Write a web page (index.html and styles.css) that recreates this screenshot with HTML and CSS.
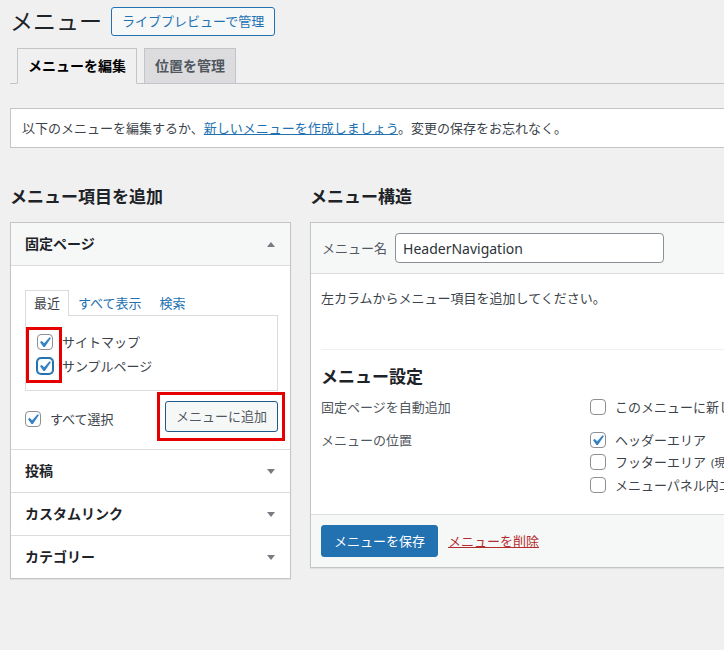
FILE: index.html
```html
<!DOCTYPE html>
<html lang="ja">
<head>
<meta charset="utf-8">
<title>メニュー</title>
<link rel="stylesheet" href="styles.css">
</head>
<body>
<div class="wrap">
  <div class="page-head">
    <h1 class="page-title">メニュー</h1>
    <a class="title-action" href="#">ライブプレビューで管理</a>
  </div>

  <nav class="nav-tabs">
    <a class="nav-tab active" href="#">メニューを編集</a>
    <a class="nav-tab" href="#">位置を管理</a>
  </nav>

  <div class="manage-menus">以下のメニューを編集するか、<a href="#">新しいメニューを作成しましょう</a>。変更の保存をお忘れなく。</div>

  <div class="columns">
    <div class="col-left">
      <h2 class="col-title">メニュー項目を追加</h2>
      <div class="accordion">
        <section class="acc-section open">
          <h3 class="acc-title">固定ページ<svg class="arrow" viewBox="0 0 8 5" width="8" height="5"><polygon points="0,5 8,5 4,0"/></svg></h3>
          <div class="acc-content">
            <ul class="inner-tabs">
              <li class="inner-tab active">最近</li>
              <li class="inner-tab"><a href="#">すべて表示</a></li>
              <li class="inner-tab"><a href="#">検索</a></li>
            </ul>
            <div class="tab-panel">
              <ul class="check-list">
                <li><span class="cb"><svg viewBox="0 0 20 20"><path d="M14.83 4.89l1.34.94-5.81 8.38H9.02L5.78 9.67l1.34-1.25 2.57 2.4z"/></svg></span>サイトマップ</li>
                <li><span class="cb focus"><svg viewBox="0 0 20 20"><path d="M14.83 4.89l1.34.94-5.81 8.38H9.02L5.78 9.67l1.34-1.25 2.57 2.4z"/></svg></span>サンプルページ</li>
              </ul>
              <span class="annot annot-checks"></span>
            </div>
            <div class="add-row">
              <label class="select-all"><span class="cb"><svg viewBox="0 0 20 20"><path d="M14.83 4.89l1.34.94-5.81 8.38H9.02L5.78 9.67l1.34-1.25 2.57 2.4z"/></svg></span>すべて選択</label>
              <span class="btn-wrap"><button class="btn-add" type="button">メニューに追加</button><span class="annot annot-btn"></span></span>
            </div>
          </div>
        </section>
        <section class="acc-section">
          <h3 class="acc-title">投稿<svg class="arrow" viewBox="0 0 8 5" width="8" height="5"><polygon points="0,0 8,0 4,5"/></svg></h3>
        </section>
        <section class="acc-section">
          <h3 class="acc-title">カスタムリンク<svg class="arrow" viewBox="0 0 8 5" width="8" height="5"><polygon points="0,0 8,0 4,5"/></svg></h3>
        </section>
        <section class="acc-section">
          <h3 class="acc-title">カテゴリー<svg class="arrow" viewBox="0 0 8 5" width="8" height="5"><polygon points="0,0 8,0 4,5"/></svg></h3>
        </section>
      </div>
    </div>

    <div class="col-right">
      <h2 class="col-title">メニュー構造</h2>
      <div class="menu-box">
        <div class="menu-head">
          <label class="menu-name-label" for="menu-name">メニュー名</label>
          <input class="menu-name-input" id="menu-name" type="text" value="HeaderNavigation">
        </div>
        <div class="menu-body">
          <p class="instructions">左カラムからメニュー項目を追加してください。</p>
          <div class="menu-settings">
            <h3 class="settings-title">メニュー設定</h3>
            <div class="setting setting-auto">
              <div class="setting-label">固定ページを自動追加</div>
              <div class="setting-options">
                <div class="opt"><span class="cb"></span>このメニューに新しいトップレベル固定ページを自動的に追加</div>
              </div>
            </div>
            <div class="setting setting-loc">
              <div class="setting-label">メニューの位置</div>
              <div class="setting-options">
                <div class="opt"><span class="cb"><svg viewBox="0 0 20 20"><path d="M14.83 4.89l1.34.94-5.81 8.38H9.02L5.78 9.67l1.34-1.25 2.57 2.4z"/></svg></span>ヘッダーエリア</div>
                <div class="opt"><span class="cb"></span>フッターエリア <span class="loc-set">(現在の設定: フッターメニュー)</span></div>
                <div class="opt"><span class="cb"></span>メニューパネル内エリア</div>
              </div>
            </div>
          </div>
        </div>
        <div class="menu-foot">
          <button class="btn-primary" type="button">メニューを保存</button>
          <a class="delete-link" href="#">メニューを削除</a>
        </div>
      </div>
    </div>
  </div>
</div>
</body>
</html>
```

FILE: styles.css
```css
* { box-sizing: border-box; }

html, body {
  margin: 0;
  padding: 0;
  overflow: hidden;
}

body {
  width: 724px;
  height: 650px;
  background: #f0f0f1;
  color: #3c434a;
  font-family: "Noto Sans", "Noto Sans CJK JP", sans-serif;
  font-size: 13px;
  line-height: 1.4;
}

.wrap {
  width: 930px;
  padding: 6px 0 0 10px;
}

/* page header */
.page-head {
  display: flex;
  align-items: center;
  height: 30px;
}

.page-title {
  margin: 0;
  font-size: 23px;
  font-weight: 400;
  line-height: 30px;
  color: #1d2327;
}

.title-action {
  margin-left: 9px;
  height: 29px;
  padding: 0 10px;
  border: 1px solid #2271b1;
  border-radius: 3px;
  background: #f6f7f7;
  color: #2271b1;
  font-size: 13px;
  line-height: 27px;
  text-decoration: none;
}

/* nav tabs */
.nav-tabs {
  display: flex;
  gap: 7px;
  margin-top: 12px;
  padding-left: 7px;
  border-bottom: 1px solid #c3c4c7;
}

.nav-tab {
  height: 36px;
  margin-bottom: -1px;
  padding: 0 10px;
  border: 1px solid #c3c4c7;
  background: #dcdcde;
  color: #50575e;
  font-size: 14px;
  font-weight: 700;
  line-height: 34px;
  text-decoration: none;
}

.nav-tab.active {
  background: #f0f0f1;
  border-bottom-color: #f0f0f1;
  color: #000;
}

/* notice box */
.manage-menus {
  margin-top: 24px;
  height: 40px;
  padding: 0 11px;
  border: 1px solid #c3c4c7;
  background: #fff;
  line-height: 38px;
  white-space: nowrap;
}

.manage-menus a {
  color: #2271b1;
  text-decoration: underline;
}

/* columns */
.columns {
  display: flex;
  align-items: flex-start;
  gap: 19px;
  margin-top: 37px;
}

.col-left {
  flex: none;
  width: 281px;
}

.col-right {
  flex: none;
  width: 620px;
}

.col-title {
  margin: 0 0 13px;
  font-size: 17px;
  font-weight: 700;
  line-height: 24px;
  color: #1d2327;
}

/* accordion */
.accordion {
  background: #fff;
  border: 1px solid #c3c4c7;
  box-shadow: 0 1px 1px rgba(0, 0, 0, 0.06);
}

.acc-section + .acc-section {
  border-top: 1px solid #dcdcde;
}

.acc-title {
  display: flex;
  align-items: center;
  justify-content: space-between;
  height: 42px;
  margin: 0;
  padding: 0 15px 0 14px;
  background: #fff;
  color: #1d2327;
  font-size: 14px;
  font-weight: 700;
  line-height: 20px;
}

.open .acc-title {
  height: 43px;
  background: #f6f7f7;
  border-bottom: 1px solid #dcdcde;
}

.arrow {
  fill: #787c82;
}

.acc-content {
  padding: 24px 12px 17px 14px;
}

.inner-tabs {
  display: flex;
  margin: 0;
  padding: 0;
  list-style: none;
}

.inner-tab {
  height: 26px;
  margin-bottom: -1px;
  padding: 0 8px;
  border: 1px solid transparent;
  border-bottom: 0;
  font-size: 13px;
  line-height: 24px;
}

.inner-tab a {
  color: #2271b1;
  text-decoration: none;
}

.inner-tab.active {
  position: relative;
  z-index: 1;
  border-color: #dcdcde;
  background: #fff;
  color: #3c434a;
}

.tab-panel {
  position: relative;
  padding: 14px 11px 12px;
  border: 1px solid #dcdcde;
}

.check-list {
  margin: 0;
  padding: 0;
  list-style: none;
}

.check-list li {
  display: flex;
  align-items: center;
  gap: 9px;
  height: 24px;
}

/* checkbox */
.cb {
  position: relative;
  flex: none;
  width: 16px;
  height: 16px;
  border: 1px solid #8c8f94;
  border-radius: 4px;
  background: #fff;
}

.cb svg {
  position: absolute;
  left: -4px;
  top: -3px;
  width: 21px;
  height: 21px;
  fill: #3582c4;
}

.cb.focus {
  border-color: #2271b1;
  box-shadow: 0 0 0 1px #2271b1;
}

/* annotations */
.annot {
  position: absolute;
  border: 3px solid #e60000;
  pointer-events: none;
}

.annot-checks {
  left: 0;
  top: 11px;
  width: 36px;
  height: 56px;
}

.add-row {
  display: flex;
  align-items: center;
  justify-content: space-between;
  margin-top: 10px;
}

.select-all {
  display: flex;
  align-items: center;
  gap: 9px;
  margin-top: 4px;
  line-height: 20px;
}

.btn-wrap {
  position: relative;
  display: block;
}

.btn-add {
  display: block;
  height: 31px;
  padding: 0 10px;
  border: 1px solid #1d5a8a;
  border-radius: 3px;
  background: #f6f7f7;
  color: #50575e;
  font-family: inherit;
  font-size: 13px;
  line-height: 29px;
}

.annot-btn {
  left: -8px;
  top: -9px;
  width: 128px;
  height: 49px;
}

/* menu structure box */
.menu-box {
  background: #fff;
  border: 1px solid #c3c4c7;
  box-shadow: 0 1px 1px rgba(0, 0, 0, 0.06);
}

.menu-head {
  display: flex;
  align-items: center;
  gap: 8px;
  padding: 10px 11px;
  background: #f6f7f7;
  border-bottom: 1px solid #dcdcde;
}

.menu-name-label {
  color: #50575e;
  line-height: 20px;
}

.menu-name-input {
  width: 269px;
  height: 30px;
  padding: 0 7px;
  border: 1px solid #8c8f94;
  border-radius: 4px;
  background: #fff;
  color: #2c3338;
  font-family: "Noto Sans", sans-serif;
  font-size: 14px;
}

.menu-body {
  padding: 14px 10px 0;
}

.instructions {
  margin: 0 0 41px;
  line-height: 20px;
}

.menu-settings {
  padding: 15px 0 18px;
  border-top: 1px solid #f0f0f1;
}

.settings-title {
  margin: 0;
  font-size: 17px;
  font-weight: 700;
  line-height: 24px;
  color: #1d2327;
}

.setting {
  display: flex;
}

.setting-auto {
  margin-top: 7px;
}

.setting-loc {
  margin-top: 10px;
}

.setting-label {
  flex: none;
  width: 269px;
  color: #50575e;
  line-height: 22px;
}

.opt {
  display: flex;
  align-items: center;
  gap: 9px;
  height: 22.5px;
  white-space: nowrap;
}

.loc-set {
  margin-left: -4px;
  font-size: 11px;
}

.menu-foot {
  display: flex;
  align-items: center;
  gap: 10px;
  padding: 10px;
  background: #f6f7f7;
  border-top: 1px solid #dcdcde;
}

.btn-primary {
  height: 32px;
  padding: 0 12px;
  border: 1px solid #2271b1;
  border-radius: 3px;
  background: #2271b1;
  color: #fff;
  font-family: inherit;
  font-size: 13px;
  line-height: 30px;
}

.delete-link {
  color: #b32d2e;
  text-decoration: underline;
}
```
